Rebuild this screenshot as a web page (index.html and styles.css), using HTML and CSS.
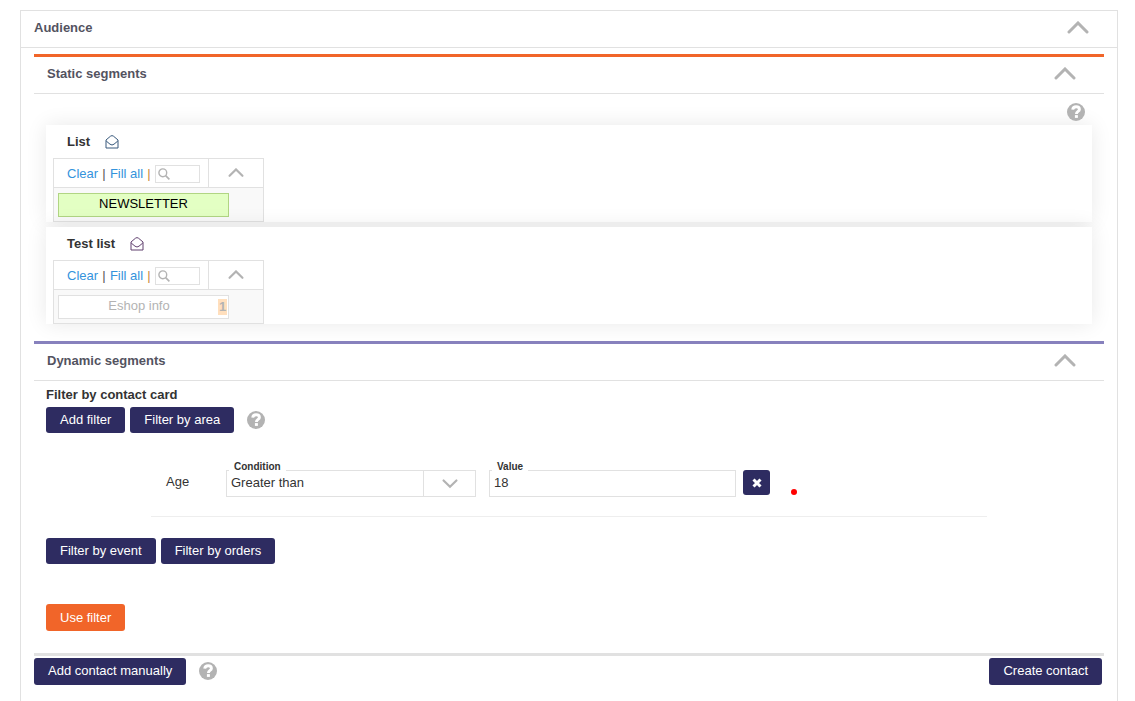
FILE: index.html
```
<!DOCTYPE html>
<html lang="en">
<head>
    <meta charset="UTF-8">
    <meta name="viewport" content="width=device-width, initial-scale=1.0">
    <title>Audience</title>
    <link rel="stylesheet" href="styles.css">
</head>
<body>

    <svg class="sprite" aria-hidden="true">
        <symbol id="up" viewBox="0 0 22 14">
            <path d="M2 11 L11 2 L20 11" fill="none" stroke="currentColor" stroke-width="3" stroke-linecap="round"/>
        </symbol>
        <symbol id="down" viewBox="0 0 22 14">
            <path d="M2 2 L11 11 L20 2" fill="none" stroke="currentColor" stroke-width="3" stroke-linecap="round"/>
        </symbol>
        <symbol id="help" viewBox="0 0 18 18">
            <circle cx="9" cy="9" r="9" fill="#b3b3b3"/>
            <path d="M5.7 6.6 C6 4.4 7.3 3.7 9.1 3.7 C11.1 3.7 12.4 4.8 12.4 6.4 C12.4 8.5 9.4 8.3 9.4 11" fill="none" stroke="#fff" stroke-width="2.9"/>
            <rect x="7.9" y="12.1" width="3" height="2.8" fill="#fff"/>
        </symbol>
        <symbol id="mail" viewBox="0 0 14 14">
            <path d="M1 5 L5.5 1.2 Q7 0 8.5 1.2 L13 5 V13 H1 Z M1.2 6 L5 9.2 Q7 10.8 9 9.2 L12.8 6" fill="none" stroke="currentColor" stroke-linejoin="round"/>
        </symbol>
        <symbol id="search" viewBox="0 0 12 12">
            <circle cx="4.8" cy="4.8" r="3.9" fill="none" stroke="currentColor" stroke-width="1.4"/>
            <path d="M7.6 7.6 L11.4 11.4" stroke="currentColor" stroke-width="1.6"/>
        </symbol>
    </svg>

    <div class="panel">
        <div class="panel-head">
            <h1>Audience</h1>
            <button class="toggle" aria-label="Collapse audience"><svg><use href="#up"/></svg></button>
        </div>

        <div class="panel-body">
            <section class="static">
                <div class="section-head">
                    <h2>Static segments</h2>
                    <button class="toggle" aria-label="Collapse static segments"><svg><use href="#up"/></svg></button>
                </div>
                <div class="help-row">
                    <button class="help" aria-label="Help"><svg><use href="#help"/></svg></button>
                </div>

                <div class="card">
                    <h3>List <svg class="mail mail-blue"><use href="#mail"/></svg></h3>
                    <div class="list">
                        <div class="list-head">
                            <div class="tools">
                                <a href="#">Clear</a><span>|</span><a href="#">Fill all</a><span class="bar">|</span>
                                <label class="search"><svg><use href="#search"/></svg><input type="text" aria-label="Search list"></label>
                            </div>
                            <button class="fold" aria-label="Collapse list"><svg><use href="#up"/></svg></button>
                        </div>
                        <div class="list-body">
                            <button class="item selected"><span class="name">NEWSLETTER</span></button>
                        </div>
                    </div>
                </div>

                <div class="card">
                    <h3>Test list <svg class="mail mail-purple"><use href="#mail"/></svg></h3>
                    <div class="list">
                        <div class="list-head">
                            <div class="tools">
                                <a href="#">Clear</a><span>|</span><a href="#">Fill all</a><span class="bar">|</span>
                                <label class="search"><svg><use href="#search"/></svg><input type="text" aria-label="Search test list"></label>
                            </div>
                            <button class="fold" aria-label="Collapse test list"><svg><use href="#up"/></svg></button>
                        </div>
                        <div class="list-body">
                            <button class="item"><span class="name">Eshop info</span><span class="count">1</span></button>
                        </div>
                    </div>
                </div>
            </section>

            <section class="dynamic">
                <div class="section-head">
                    <h2>Dynamic segments</h2>
                    <button class="toggle" aria-label="Collapse dynamic segments"><svg><use href="#up"/></svg></button>
                </div>
                <div class="filters">
                    <h3>Filter by contact card</h3>
                    <div class="buttons">
                        <button class="btn">Add filter</button>
                        <button class="btn">Filter by area</button>
                        <button class="help" aria-label="Help"><svg><use href="#help"/></svg></button>
                    </div>

                    <div class="filter-row">
                        <span class="filter-name">Age</span>
                        <div class="field condition">
                            <label for="condition">Condition</label>
                            <select id="condition">
                                <option>Greater than</option>
                                <option>Less than</option>
                                <option>Equals</option>
                            </select>
                            <span class="arrow"><svg><use href="#down"/></svg></span>
                        </div>
                        <div class="field value">
                            <label for="value">Value</label>
                            <input type="text" id="value" value="18">
                        </div>
                        <button class="remove" aria-label="Remove filter">
                            <svg viewBox="0 0 10 10"><path d="M1.5 1.5 L8.5 8.5 M8.5 1.5 L1.5 8.5" stroke="#fff" stroke-width="3"/></svg>
                        </button>
                        <span class="dot"></span>
                    </div>

                    <div class="buttons">
                        <button class="btn">Filter by event</button>
                        <button class="btn">Filter by orders</button>
                    </div>
                    <button class="btn btn-big btn-orange">Use filter</button>
                </div>
            </section>

            <div class="footer">
                <button class="btn btn-big">Add contact manually</button>
                <button class="help" aria-label="Help"><svg><use href="#help"/></svg></button>
                <button class="btn btn-big create">Create contact</button>
            </div>
        </div>
    </div>

</body>
</html>
```
FILE: styles.css
```
* {
    box-sizing: border-box;
}

body {
    margin: 0;
    padding: 10px 17px 0 20px;
    background: #fff;
    color: #333;
    font: 13px/16px "Liberation Sans", Arial, sans-serif;
}

h1, h2, h3 {
    margin: 0;
    font-size: 13px;
    line-height: 16px;
}

h1, h2 {
    color: #53535f;
}

button, input, select {
    font: inherit;
    color: inherit;
}

button {
    padding: 0;
    border: 0;
    background: none;
    cursor: pointer;
}

svg {
    display: block;
}

a {
    color: #3493dc;
    text-decoration: none;
}

.sprite {
    display: none;
}

.panel {
    min-height: calc(100vh - 10px);
    border: 1px solid #e1e1e1;
    border-bottom: 0;
}

.panel-head, .section-head {
    display: flex;
    justify-content: space-between;
    align-items: center;
    height: 37px;
    padding: 0 28px 2px 13px;
    border-bottom: 1px solid #e1e1e1;
}

.panel-body {
    padding: 6px 13px 0;
}

.toggle {
    color: #b3b3b3;
}

.toggle svg {
    width: 22px;
    height: 14px;
}

/* static segments */
.static {
    border-top: 3px solid #f16529;
}

.help-row {
    display: flex;
    justify-content: flex-end;
    height: 31px;
    padding: 9px 19px 0 0;
}

.help, .help svg {
    width: 18px;
    height: 18px;
}

.card {
    margin: 0 12px 5px;
    padding: 9px 7px 0;
    background: #fff;
    box-shadow: 0 0 20px rgba(0, 0, 0, 0.09);
}

.card h3 {
    display: flex;
    gap: 15px;
    height: 24px;
    padding-left: 14px;
}

.mail {
    width: 14px;
    height: 14px;
    margin-top: 1px;
}

.mail-blue {
    color: #38597c;
}

.mail-purple {
    color: #61406f;
}

.list {
    width: 211px;
    border: 1px solid #e1e1e1;
}

.list-head {
    display: flex;
    height: 29px;
    border-bottom: 1px solid #e1e1e1;
}

.tools {
    flex: 1;
    display: flex;
    align-items: center;
    justify-content: space-between;
    padding: 1px 8px 0 13px;
    border-right: 1px solid #e1e1e1;
    color: #555;
}

.bar {
    color: #c98a3c;
}

.search {
    display: flex;
    align-items: center;
    width: 45px;
    height: 18px;
    padding-left: 2px;
    border: 1px solid #e1e1e1;
    color: #b3b3b3;
}

.search svg {
    flex: none;
    width: 12px;
    height: 12px;
}

.search input {
    width: 100%;
    min-width: 0;
    height: 16px;
    padding: 0;
    border: 0;
    outline: 0;
    background: none;
}

.fold {
    width: 54px;
    color: #b3b3b3;
}

.fold svg {
    width: 16px;
    height: 10px;
    margin: 0 auto;
}

.list-body {
    height: 33px;
    padding: 5px 4px;
    background: #f9f9f9;
}

.item {
    display: flex;
    align-items: center;
    width: 171px;
    height: 24px;
    padding: 0 1px 2px;
    border: 1px solid #e1e1e1;
    background: #fff;
    color: #b3b3b3;
}

.item.selected {
    border-color: #b1d583;
    background: #e3ffc3;
    color: #000;
}

.name {
    flex: 1;
}

.count {
    width: 9px;
    margin-top: 2px;
    background: #ffdfbd;
    font-weight: bold;
}

/* dynamic segments */
.dynamic {
    margin-top: 17px;
    border-top: 3px solid #8781bd;
}

.filters {
    padding: 6px 12px 22px;
}

.filters h3 {
    margin-bottom: 4px;
}

.buttons {
    display: flex;
    align-items: center;
    gap: 5px;
}

.buttons .help {
    margin-left: 8px;
}

.btn {
    height: 26px;
    padding: 0 14px;
    border-radius: 3px;
    background: #2e2c61;
    color: #fff;
}

.btn-big {
    height: 27px;
}

.btn-orange {
    margin-top: 40px;
    background: #f16529;
}

.filter-row {
    display: flex;
    align-items: flex-start;
    margin: 37px 105px 21px;
    padding: 0 15px 19px;
    border-bottom: 1px solid #eee;
}

.filter-name {
    width: 60px;
    padding-top: 4px;
}

.field {
    position: relative;
    height: 27px;
}

.field label {
    position: absolute;
    top: -11px;
    left: 3px;
    padding: 0 5px;
    background: #fff;
    font-size: 10px;
    font-weight: bold;
}

.field select, .field input {
    display: block;
    width: 100%;
    height: 27px;
    padding: 0 4px 2px;
    border: 1px solid #e1e1e1;
    border-radius: 0;
    background: #fff;
    outline: 0;
    appearance: none;
}

.condition {
    flex: 0 1 250px;
    margin-right: 13px;
}

.value {
    flex: 0 1 247px;
    margin-right: 7px;
}

.arrow {
    position: absolute;
    top: 1px;
    right: 1px;
    bottom: 1px;
    display: flex;
    align-items: center;
    justify-content: center;
    width: 52px;
    border-left: 1px solid #e1e1e1;
    color: #b3b3b3;
    pointer-events: none;
}

.arrow svg {
    width: 16px;
    height: 10px;
}

.remove {
    width: 27px;
    height: 25px;
    border-radius: 3px;
    background: #2e2c61;
}

.remove svg {
    width: 10px;
    height: 10px;
    margin: 0 auto;
}

.dot {
    align-self: flex-end;
    width: 6px;
    height: 6px;
    margin: 0 0 2px 21px;
    border-radius: 50%;
    background: #f00;
}

.footer {
    display: flex;
    align-items: center;
    padding: 2px 2px 16px 0;
    border-top: 3px solid #e1e1e1;
}

.footer .btn {
    padding-bottom: 2px;
}

.footer .help {
    margin: 0 0 2px 13px;
}

.footer .create {
    margin-left: auto;
}
```
